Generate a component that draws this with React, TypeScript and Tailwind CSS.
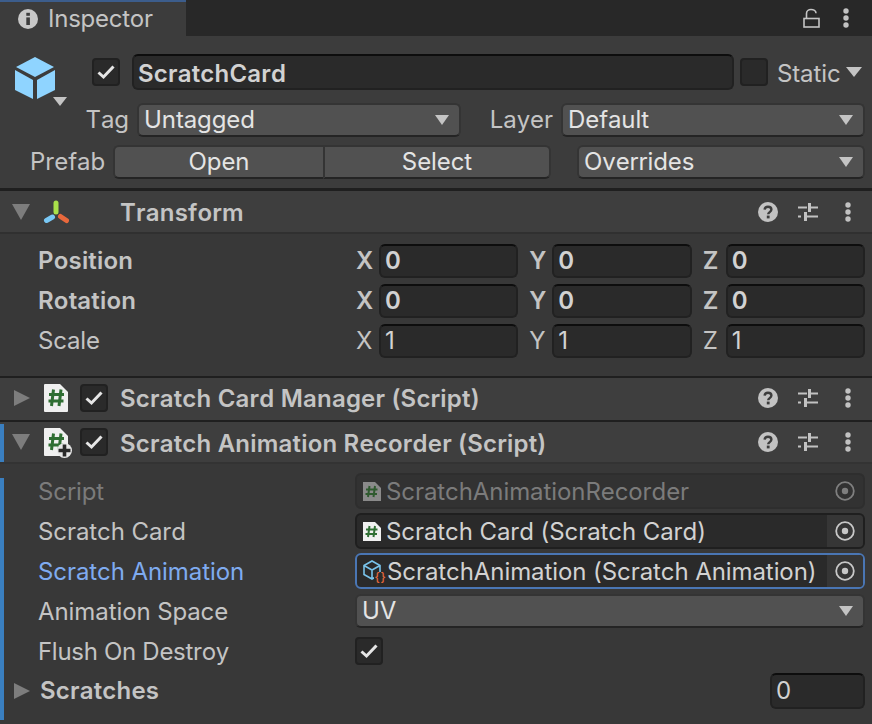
import React from "react";

const Tri = ({ c = "#c4c4c4", w = 16, h = 12 }: { c?: string; w?: number; h?: number }) => (
  <svg width={w} height={h} viewBox="0 0 16 12" preserveAspectRatio="none" className="shrink-0">
    <path d="M0 0H16L8 12Z" fill={c} />
  </svg>
);

const FoldRight = () => (
  <svg width="16" height="16" viewBox="0 0 16 16" className="shrink-0"><path d="M0 0L16 8L0 16Z" fill="#7d7d7d" /></svg>
);
const FoldDown = () => (
  <svg width="18" height="16" viewBox="0 0 18 16" className="shrink-0"><path d="M0 0H18L9 16Z" fill="#7d7d7d" /></svg>
);

const Check = ({ on = true }: { on?: boolean }) => (
  <div className="w-[28px] h-[28px] shrink-0 rounded-[4px] bg-[#2a2a2a] border-2 border-[#212121] flex items-center justify-center">
    {on && (
      <svg width="20" height="18" viewBox="0 0 20 18">
        <path d="M2.5 9.5L7.5 14L17.5 3.5" fill="none" stroke="#e6e6e6" strokeWidth="3" />
      </svg>
    )}
  </div>
);

const Popup = ({ text, className = "" }: { text: string; className?: string }) => (
  <div className={`h-[34px] rounded-[6px] bg-[#515151] border-2 border-t-[#343434] border-x-[#343434] border-b-[#242424] flex items-center justify-between pl-[5px] pr-[10px] text-[#e4e4e4] ${className}`}>
    <span>{text}</span>
    <Tri w={14} h={10} />
  </div>
);

const Num = ({ axis, v, className = "" }: { axis: string; v: string; className?: string }) => (
  <div className={`flex items-center ${className}`}>
    <span className="w-[23px] shrink-0 text-[#c4c4c4]">{axis}</span>
    <div className="flex-1 h-[34px] rounded-[6px] bg-[#2a2a2a] border-2 border-[#212121] border-t-[#0d0d0d] flex items-center pl-[4px] text-[#d2d2d2]">{v}</div>
  </div>
);

const VecRow = ({ label, v, bold }: { label: string; v: string; bold?: boolean }) => (
  <div className="h-[40px] flex items-center pl-[38px] pr-[7px]">
    <span className={`w-[318px] shrink-0 ${bold ? "font-semibold tracking-[0.2px]" : ""} text-[#c4c4c4]`}>{label}</span>
    <div className={`flex-1 grid grid-cols-3 gap-x-[11px] ${bold ? "font-semibold" : ""}`}>
      <Num axis="X" v={v} />
      <Num axis="Y" v={v} />
      <Num axis="Z" v={v} />
    </div>
  </div>
);

const Help = () => (
  <svg width="22" height="22" viewBox="0 0 22 22" className="shrink-0">
    <circle cx="11" cy="11" r="10" fill="#c2c2c2" />
    <path d="M7.6 8.6C7.8 6.6 9.2 5.7 11 5.7c2 0 3.4 1.2 3.4 2.8 0 2.6-3.2 2.6-3.2 4.8" fill="none" stroke="#3c3c3c" strokeWidth="2.4" />
    <rect x="9.8" y="14.6" width="2.8" height="2.8" fill="#3c3c3c" />
  </svg>
);
const Sliders = () => (
  <svg width="20" height="20" viewBox="0 0 20 20" className="shrink-0">
    <path d="M0 5.5H9M13 5.5H20M0 14.5H3M7 14.5H20" stroke="#c2c2c2" strokeWidth="2" />
    <rect x="10" y="1" width="3" height="9" fill="#c2c2c2" />
    <rect x="6" y="10" width="3" height="9" fill="#c2c2c2" />
  </svg>
);
const Dots = ({ c = "#c2c2c2" }: { c?: string }) => (
  <svg width="6" height="20" viewBox="0 0 6 20" className="shrink-0">
    <circle cx="3" cy="3" r="2.7" fill={c} />
    <circle cx="3" cy="10" r="2.7" fill={c} />
    <circle cx="3" cy="17" r="2.7" fill={c} />
  </svg>
);
const HeaderTools = () => (
  <div className="ml-auto flex items-center">
    <Help />
    <div className="ml-[19px]"><Sliders /></div>
    <div className="ml-[27px] mr-[21px]"><Dots /></div>
  </div>
);

const ScriptIcon = ({ plus }: { plus?: boolean }) => (
  <svg width="24" height="28" viewBox="0 0 24 28" className="shrink-0 overflow-visible">
    <path d="M0 1a1 1 0 0 1 1-1H16L24 8V27a1 1 0 0 1-1 1H1a1 1 0 0 1-1-1Z" fill="#f0f0f0" />
    <path d="M9.5 5.5L7.5 22M17 5.5L15 22M5 10.5H20M4.5 17H19.5" stroke="#2f6e33" strokeWidth="3" fill="none" />
    {plus && (
      <>
        <circle cx="20.5" cy="22.5" r="7.5" fill="#e8e8e8" />
        <path d="M14.5 22.5H26.5M20.5 16.5V28.5" stroke="#2a2a2a" strokeWidth="3.6" />
      </>
    )}
  </svg>
);

const SmallScript = ({ dim }: { dim?: boolean }) => (
  <svg width="18" height="20" viewBox="0 0 18 20" className="shrink-0">
    <path d="M0 1H12L18 7V20H0Z" fill={dim ? "#8a8a8a" : "#f0f0f0"} />
    <path d="M6.5 5L5 16M12 5L10.5 16M3 8.5H14.5M2.5 13H14" stroke={dim ? "#2f5a2f" : "#2f6e33"} strokeWidth="2" fill="none" />
  </svg>
);

const Target = ({ dim }: { dim?: boolean }) => (
  <svg width="20" height="20" viewBox="0 0 20 20">
    <circle cx="10" cy="10" r="8.8" fill="none" stroke={dim ? "#7f7f7f" : "#c8c8c8"} strokeWidth="1.8" />
    <circle cx="10" cy="10" r="3.2" fill={dim ? "#7f7f7f" : "#c8c8c8"} />
  </svg>
);

const ObjField = ({ icon, text, dim, focus, gap = "gap-[5px]" }: { icon: React.ReactNode; text: string; dim?: boolean; focus?: boolean; gap?: string }) => (
  <div className={`flex-1 min-w-0 h-[36px] rounded-[6px] border-2 flex items-center overflow-hidden ${focus ? "border-[#4a76b4]" : dim ? "border-[#2e2e2e]" : "border-[#1f1f1f]"} ${dim ? "bg-[#323232]" : "bg-[#2a2a2a]"}`}>
    <div className={`flex-1 min-w-0 flex items-center pl-[6px] ${gap} whitespace-nowrap ${dim ? "text-[#7b7b7b]" : "text-[#d2d2d2]"}`}>
      {icon}
      <span className="pt-[2px]">{text}</span>
    </div>
    <div className={`w-[36px] h-full shrink-0 flex items-center justify-center ${dim ? "" : "bg-[#363636]"}`}>
      <Target dim={dim} />
    </div>
  </div>
);

const PropRow = ({ label, children, labelClass = "text-[#c4c4c4]" }: { label: string; children: React.ReactNode; labelClass?: string }) => (
  <div className="h-[40px] flex items-center pl-[38px] pr-[7px]">
    <span className={`w-[317px] shrink-0 pt-[1px] ${labelClass}`}>{label}</span>
    {children}
  </div>
);

const AnimIcon = () => (
  <svg width="24" height="26" viewBox="0 0 24 26" className="shrink-0">
    <path d="M1 7.5L9 3L17 7.5V16.5L9 21L1 16.5ZM1 7.5L9 12L17 7.5M9 12V21" fill="none" stroke="#79c3ea" strokeWidth="1.6" />
    <rect x="11" y="14" width="11" height="11" fill="#2a2a2a" />
    <text x="11.5" y="23" fontSize="12" fill="#e8683c" fontFamily="Inter, sans-serif" fontWeight="500" letterSpacing="0.6">{"{}"}</text>
  </svg>
);

export default function App() {
  return (
    <div className="w-[872px] h-[724px] overflow-hidden bg-[#383838] text-[24px] leading-none [font-kerning:none] tracking-[-0.08px] relative" style={{ fontFamily: "Inter, sans-serif" }}>
      {/* tab bar */}
      <div className="h-[36px] bg-[#282828] flex items-stretch">
        <div className="w-[186px] bg-[#3c3c3c] border-t-2 border-[#3c5d8c] flex items-center pl-[18px] text-[#c4c4c4]">
          <svg width="20" height="20" viewBox="0 0 20 20" className="shrink-0">
            <circle cx="10" cy="10" r="10" fill="#c8c8c8" />
            <rect x="8.3" y="8.4" width="3.6" height="7.6" fill="#3c3c3c" />
            <rect x="8.3" y="3.8" width="3.6" height="3" fill="#3c3c3c" />
          </svg>
          <span className="ml-[10px] tracking-[-0.25px]">Inspector</span>
        </div>
        <div className="flex-1 flex items-center justify-end pr-[23px] gap-[22px]">
          <svg width="18" height="20" viewBox="0 0 18 20">
            <rect x="1" y="10.5" width="15" height="8.5" fill="none" stroke="#c4c4c4" strokeWidth="1.6" />
            <path d="M3.5 10V5.5C3.5 3 5.5 1.5 8 1.5S13 3 13 5.2" fill="none" stroke="#c4c4c4" strokeWidth="1.6" />
          </svg>
          <Dots />
        </div>
      </div>

      {/* GameObject header */}
      <div className="h-[152px] bg-[#3c3c3c] flex flex-col">
        <div className="flex items-start">
          <div className="w-[92px] shrink-0 relative pl-[14px] pt-[20px] h-[70px]">
            <svg width="42" height="44" viewBox="0 0 42 44">
              <path d="M21 1L40 11L21 21L2 11Z" fill="#8fd4ff" />
              <path d="M1 14L19 24V43L1 34Z" fill="#8fd4ff" />
              <path d="M41 14L23 24V43L41 34Z" fill="#8fd4ff" />
            </svg>
            <div className="absolute left-[53px] top-[61px]"><Tri w={14} h={9} /></div>
          </div>
          <div className="mt-[18px] flex-1 flex items-center">
            <Check />
            <div className="ml-[12px] w-[602px] h-[36px] rounded-[6px] bg-[#2a2a2a] border-2 border-[#212121] border-t-[#0d0d0d] flex items-center pl-[4px] pt-[3px] font-semibold tracking-[0.2px] text-[#d2d2d2]">ScratchCard</div>
            <div className="ml-[6px]"><Check on={false} /></div>
            <span className="ml-[9px] pt-[4px] text-[#c4c4c4]">Static</span>
            <span className="ml-[5px]"><Tri w={16} h={10} /></span>
          </div>
        </div>
        <div className="-mt-[3px] flex items-center h-[34px] pr-[7px]">
          <span className="w-[137px] shrink-0 text-right pr-[8px] text-[#c4c4c4]">Tag</span>
          <Popup text="Untagged" className="w-[324px] shrink-0" />
          <span className="w-[100px] shrink-0 text-right pr-[8px] text-[#c4c4c4]">Layer</span>
          <Popup text="Default" className="flex-1" />
        </div>
        <div className="mt-[8px] flex items-center h-[34px] pr-[7px]">
          <span className="w-[113px] shrink-0 text-right pr-[8px] text-[#c4c4c4]">Prefab</span>
          <div className="w-[210px] h-[34px] rounded-l-[6px] bg-[#515151] border-2 border-r-0 border-[#343434] border-b-[#242424] flex items-center justify-center text-[#e4e4e4]">Open</div>
          <div className="w-[228px] h-[34px] rounded-r-[6px] bg-[#515151] border-2 border-[#343434] border-b-[#242424] flex items-center justify-center text-[#e4e4e4]">Select</div>
          <div className="w-[26px] shrink-0" />
          <Popup text="Overrides" className="flex-1" />
        </div>
      </div>

      {/* Transform */}
      <div className="h-[3px] bg-[#1f1f1f]" />
      <div className="h-[43px] bg-[#3e3e3e] border-b-2 border-[#303030] flex items-center font-semibold tracking-[0.2px] text-[#c4c4c4]">
        <div className="ml-[12px]"><FoldDown /></div>
        <svg width="26" height="24" viewBox="0 0 26 24" className="ml-[13px] shrink-0">
          <path d="M13 3V12" stroke="#a9e04a" strokeWidth="5" strokeLinecap="round" />
          <path d="M3.5 20.5L9.5 17" stroke="#79c8f5" strokeWidth="5" strokeLinecap="round" />
          <path d="M17.5 16.5L23.5 20.5" stroke="#e8683c" strokeWidth="5" strokeLinecap="round" />
        </svg>
        <span className="ml-[51px] pt-[2px]">Transform</span>
        <HeaderTools />
      </div>
      <div className="pt-[7px] pb-[15px]">
        <VecRow label="Position" v="0" bold />
        <VecRow label="Rotation" v="0" bold />
        <VecRow label="Scale" v="1" />
      </div>

      {/* Manager */}
      <div className="h-[2px] bg-[#1f1f1f]" />
      <div className="h-[42px] pb-[2px] bg-[#3e3e3e] flex items-center font-semibold tracking-[0.2px] text-[#c4c4c4]">
        <div className="ml-[14px]"><FoldRight /></div>
        <div className="ml-[14px]"><ScriptIcon /></div>
        <div className="ml-[12px]"><Check /></div>
        <span className="ml-[12px] pt-[2px]">Scratch Card Manager (Script)</span>
        <HeaderTools />
      </div>

      {/* Recorder */}
      <div className="h-[2px] bg-[#1f1f1f]" />
      <div className="h-[42px] bg-[#3e3e3e] border-b-2 border-[#333333] flex items-center font-semibold tracking-[0.2px] text-[#c4c4c4] relative">
        <div className="absolute left-0 top-[2px] bottom-0 w-[4px] bg-[#3a7fc0]" />
        <div className="ml-[12px]"><FoldDown /></div>
        <div className="ml-[14px]"><ScriptIcon plus /></div>
        <div className="ml-[12px]"><Check /></div>
        <span className="ml-[12px] pt-[3px]">Scratch Animation Recorder (Script)</span>
        <HeaderTools />
      </div>
      <div className="pt-[7px] relative h-[260px]">
        <div className="absolute left-0 top-[14px] bottom-[4px] w-[4px] bg-[#3a7fc0]" />
        <PropRow label="Script" labelClass="text-[#7b7b7b]">
          <ObjField dim icon={<SmallScript dim />} text="ScratchAnimationRecorder" />
        </PropRow>
        <PropRow label="Scratch Card">
          <ObjField icon={<SmallScript />} text="Scratch Card (Scratch Card)" />
        </PropRow>
        <PropRow label="Scratch Animation" labelClass="text-[#7fabf0]">
          <ObjField focus gap="-ml-0 gap-0" icon={<AnimIcon />} text="ScratchAnimation (Scratch Animation)" />
        </PropRow>
        <PropRow label="Animation Space">
          <Popup text="UV" className="flex-1" />
        </PropRow>
        <PropRow label="Flush On Destroy" labelClass="text-[#c4c4c4] tracking-[-0.3px]">
          <Check />
        </PropRow>
        <div className="h-[40px] flex items-center pr-[7px] font-semibold tracking-[0.2px] text-[#c4c4c4]">
          <div className="ml-[14px]"><FoldRight /></div>
          <span className="ml-[10px]">Scratches</span>
          <div className="ml-auto w-[95px] h-[36px] rounded-[6px] bg-[#2a2a2a] border-2 border-[#212121] border-t-[#0d0d0d] flex items-center pl-[4px] font-normal text-[#d2d2d2]">0</div>
        </div>
      </div>
    </div>
  );
}
